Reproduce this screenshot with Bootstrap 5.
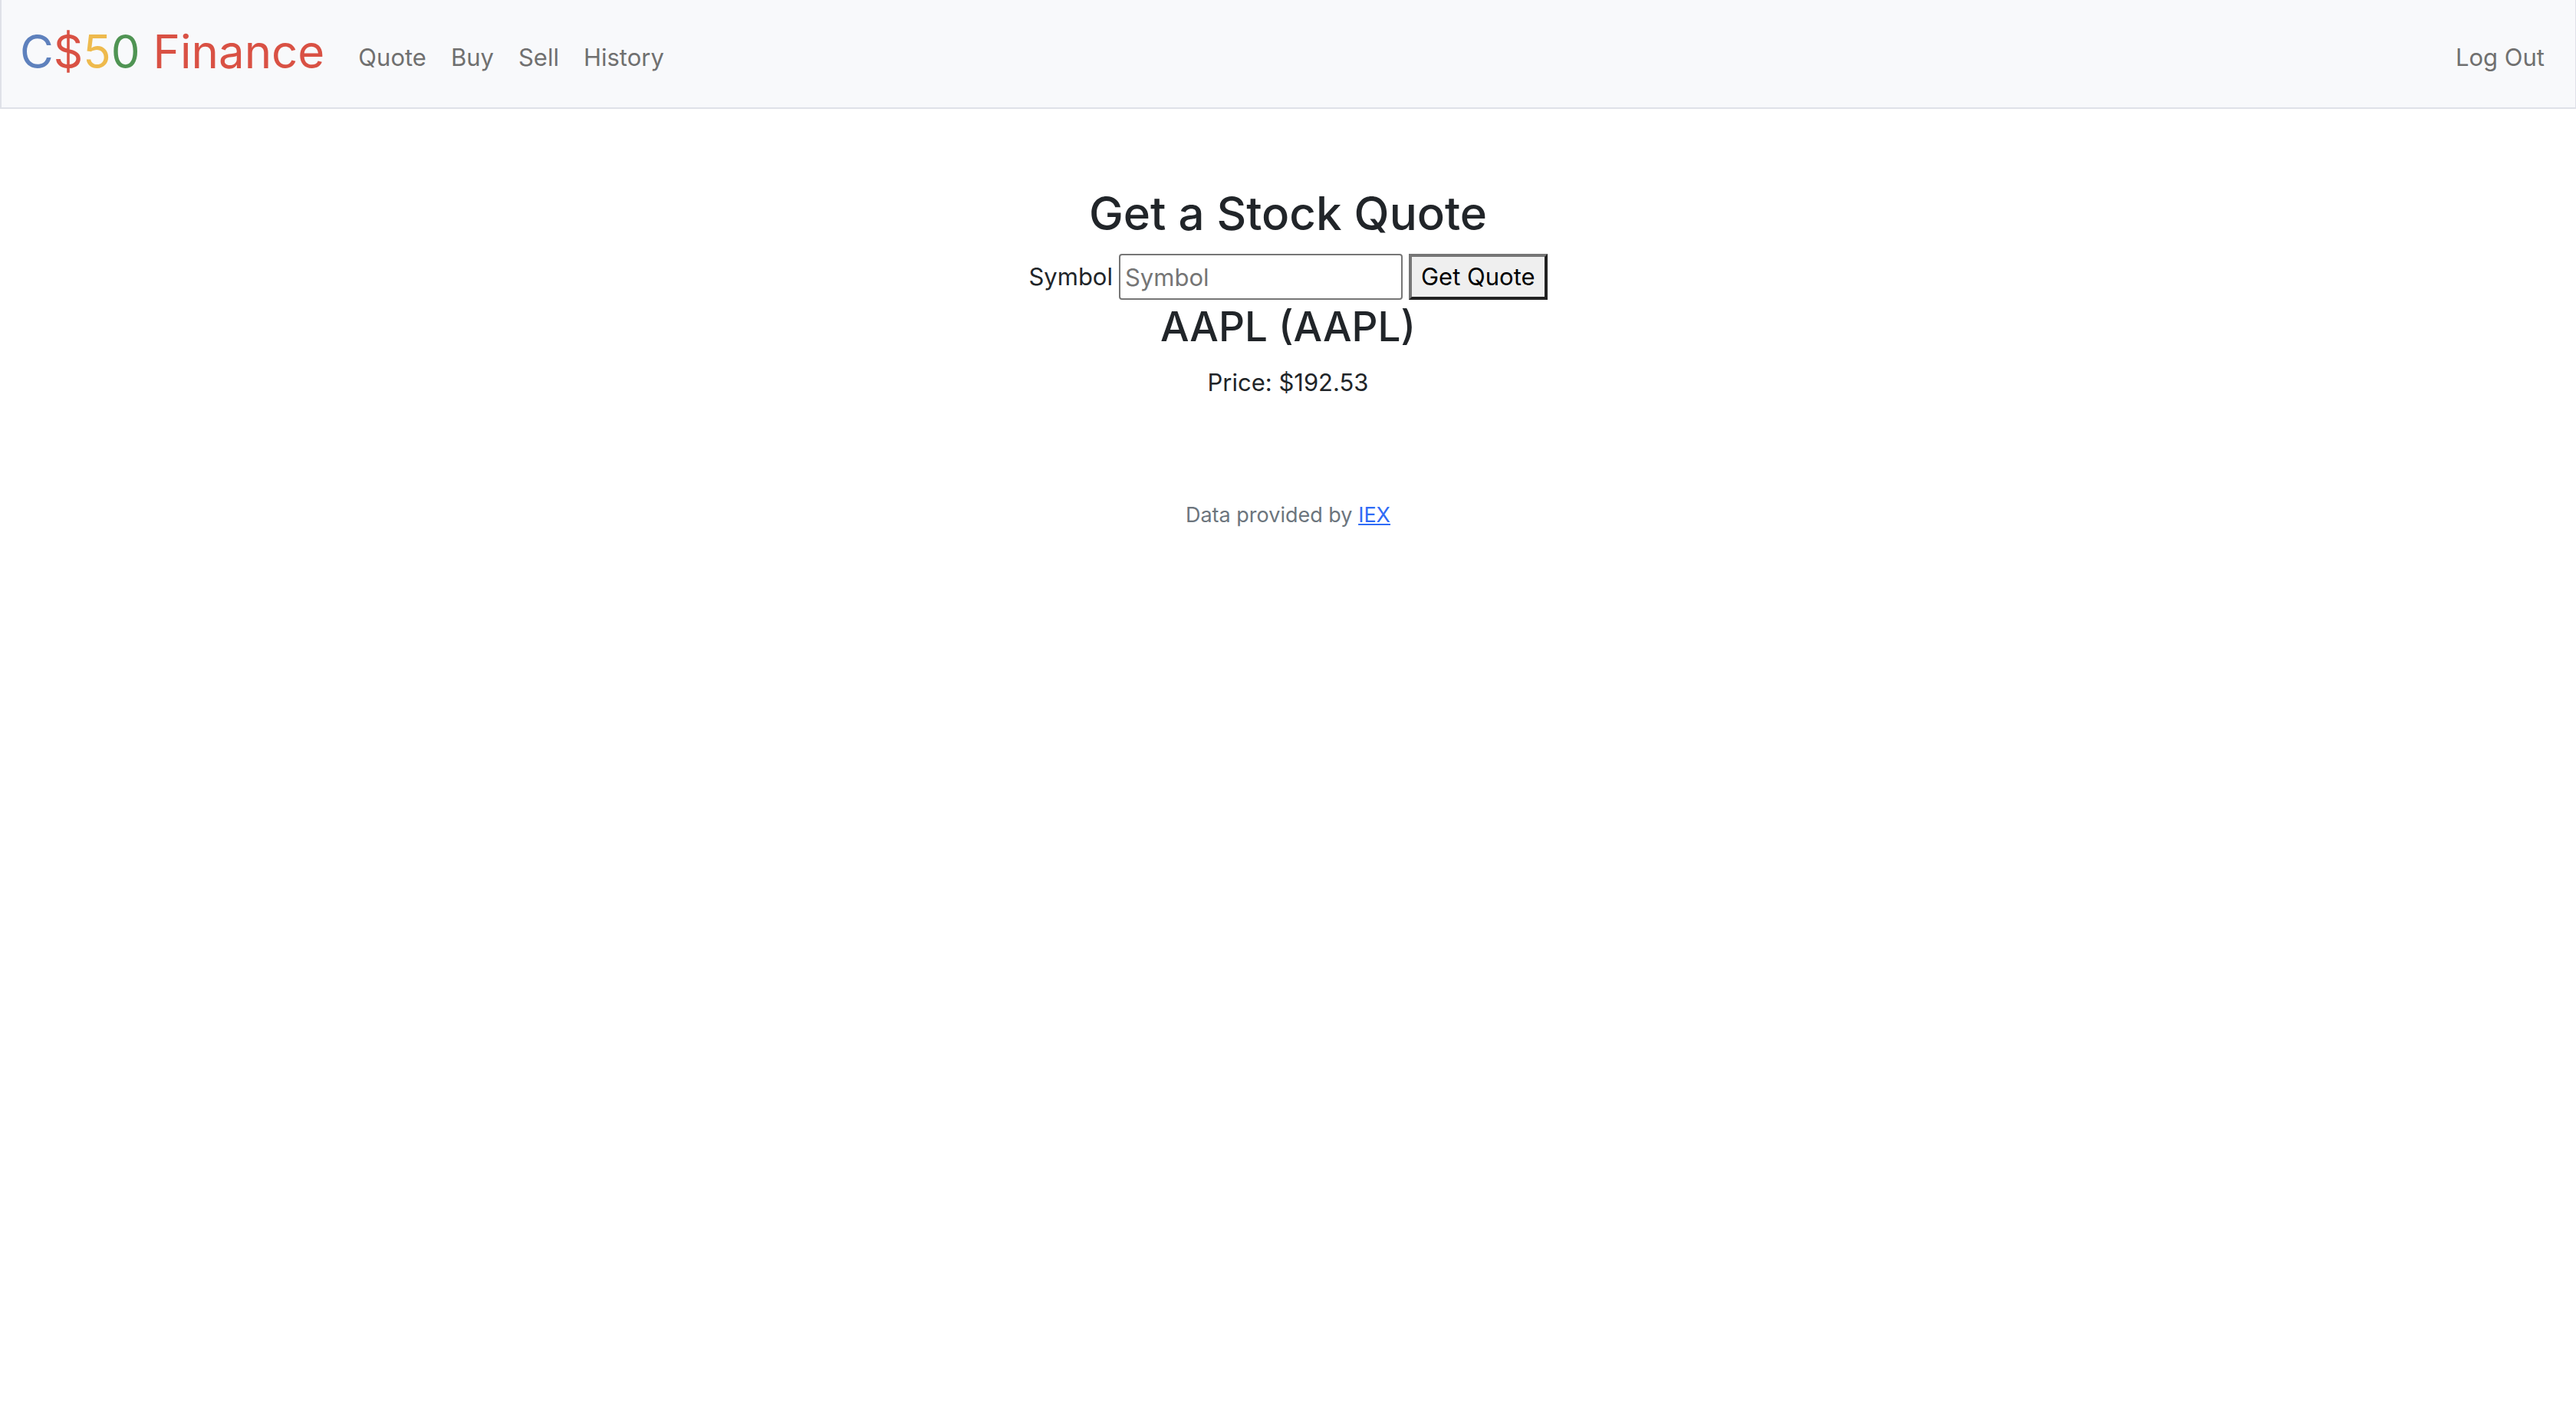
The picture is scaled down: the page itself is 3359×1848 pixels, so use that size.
<!DOCTYPE html>
<html lang="en">
<head>
<meta charset="utf-8">
<meta name="viewport" content="width=device-width, initial-scale=1">
<title>C$50 Finance: Quote</title>
<link href="https://cdn.jsdelivr.net/npm/bootstrap@5.3.0/dist/css/bootstrap.min.css" rel="stylesheet">
<script src="https://cdn.jsdelivr.net/npm/bootstrap@5.3.0/dist/js/bootstrap.bundle.min.js"></script>
<style>
html { font-size: 32px; }
body { font-family: Inter, "Liberation Sans", sans-serif; font-size: 31px; line-height: 48px; color: #212529; }
h1 { font-size: 60px; line-height: 80px; margin-bottom: 13px; }
h2 { font-size: 53px; line-height: 70px; margin-bottom: 14px; }
.site-nav { background: #f8f9fb; border: 2px solid #dfe1e8; border-top: 0; border-right-width: 1px; padding: 16px 0 22px; }
.site-nav .navbar-brand { font-size: 60px; line-height: 102px; padding: 0; margin-right: 28px; }
.site-nav .nav-link { font-size: 31px; color: #707070; }
.blue { color: #5e81bd; }
.red { color: #d95144; }
.yellow { color: #eeba4d; }
.green { color: #4f9453; }
.quote-form { gap: 8px; }
.quote-form input { width: 370px; height: 60px; padding: 4px 6px; border: 2px solid #767676; border-radius: 4px; background: #fff; color: #212529; }
.quote-form input::placeholder { color: #757575; }
.quote-form button { height: 60px; padding: 0 12px; border: 4px solid; border-color: #767676 #212121 #212121 #767676; background: #efefef; color: #000; line-height: 48px; }
.credit { font-size: 27px; line-height: 42px; color: #6c757d; }
.credit a { color: #2f6bf6; }
</style>
</head>
<body>
<nav class="site-nav navbar navbar-expand-md navbar-light">
  <div class="container-fluid">
    <a class="navbar-brand" href="/"><span class="blue">C</span><span class="red">$</span><span class="yellow">5</span><span class="green">0</span> <span class="red">Finance</span></a>
    <div class="collapse navbar-collapse">
      <ul class="navbar-nav me-auto mt-2">
        <li class="nav-item"><a class="nav-link" href="/quote">Quote</a></li>
        <li class="nav-item"><a class="nav-link" href="/buy">Buy</a></li>
        <li class="nav-item"><a class="nav-link" href="/sell">Sell</a></li>
        <li class="nav-item"><a class="nav-link" href="/history">History</a></li>
      </ul>
      <ul class="navbar-nav ms-auto mt-2">
        <li class="nav-item"><a class="nav-link" href="/logout">Log Out</a></li>
      </ul>
    </div>
  </div>
</nav>
<main class="container-fluid py-5 text-center">
  <h1>Get a Stock Quote</h1>
  <form class="quote-form d-flex justify-content-center align-items-center" action="/quote" method="post">
    <label for="symbol">Symbol</label>
    <input id="symbol" name="symbol" placeholder="Symbol" type="text" autocomplete="off">
    <button type="submit">Get Quote</button>
  </form>
  <h2>AAPL (AAPL)</h2>
  <p>Price: $192.53</p>
</main>
<footer class="credit mb-5 text-center">Data provided by <a href="https://iexcloud.io/">IEX</a></footer>
</body>
</html>
